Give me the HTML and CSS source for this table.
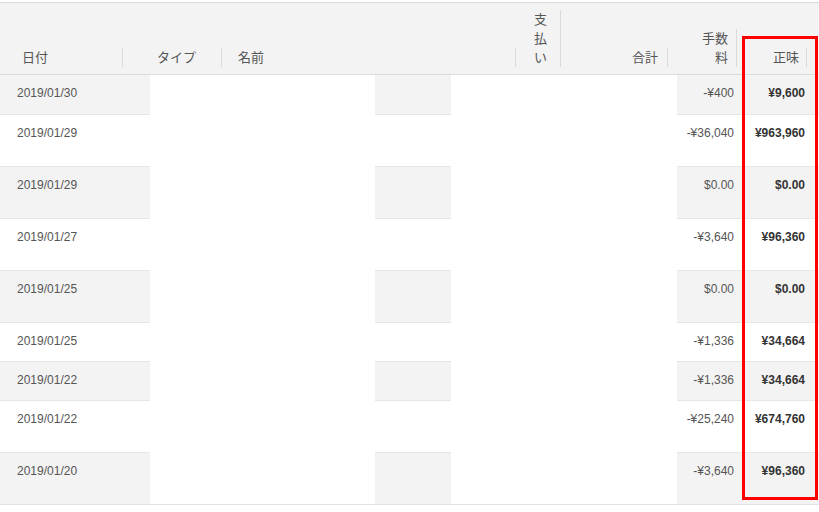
FILE: index.html
```html
<!DOCTYPE html>
<html lang="ja">
<head>
<meta charset="utf-8">
<title>取引一覧</title>
<link rel="stylesheet" href="styles.css">
</head>
<body>
<div class="sheet">
  <div class="head">
    <div class="th th-date">日付</div>
    <div class="th th-type">タイプ</div>
    <div class="th th-name">名前</div>
    <div class="th th-pay">支払い</div>
    <div class="th th-total">合計</div>
    <div class="th th-fee">手数料</div>
    <div class="th th-net">正味</div>
  </div>
  <div class="body">
    <div class="row odd"><div class="td date">2019/01/30</div><div class="td mask m1"></div><div class="td gap"></div><div class="td mask m2"></div><div class="td fee">-¥400</div><div class="td net">¥9,600</div></div>
    <div class="row tall"><div class="td date">2019/01/29</div><div class="td mask m1"></div><div class="td gap"></div><div class="td mask m2"></div><div class="td fee">-¥36,040</div><div class="td net">¥963,960</div></div>
    <div class="row odd tall"><div class="td date">2019/01/29</div><div class="td mask m1"></div><div class="td gap"></div><div class="td mask m2"></div><div class="td fee">$0.00</div><div class="td net">$0.00</div></div>
    <div class="row tall"><div class="td date">2019/01/27</div><div class="td mask m1"></div><div class="td gap"></div><div class="td mask m2"></div><div class="td fee">-¥3,640</div><div class="td net">¥96,360</div></div>
    <div class="row odd tall"><div class="td date">2019/01/25</div><div class="td mask m1"></div><div class="td gap"></div><div class="td mask m2"></div><div class="td fee">$0.00</div><div class="td net">$0.00</div></div>
    <div class="row"><div class="td date">2019/01/25</div><div class="td mask m1"></div><div class="td gap"></div><div class="td mask m2"></div><div class="td fee">-¥1,336</div><div class="td net">¥34,664</div></div>
    <div class="row odd"><div class="td date">2019/01/22</div><div class="td mask m1"></div><div class="td gap"></div><div class="td mask m2"></div><div class="td fee">-¥1,336</div><div class="td net">¥34,664</div></div>
    <div class="row tall"><div class="td date">2019/01/22</div><div class="td mask m1"></div><div class="td gap"></div><div class="td mask m2"></div><div class="td fee">-¥25,240</div><div class="td net">¥674,760</div></div>
    <div class="row odd tall last"><div class="td date">2019/01/20</div><div class="td mask m1"></div><div class="td gap"></div><div class="td mask m2"></div><div class="td fee">-¥3,640</div><div class="td net">¥96,360</div></div>
  </div>
  <div class="highlight"></div>
</div>
</body>
</html>
```

FILE: styles.css
```css
* { box-sizing: border-box; }

html, body {
  margin: 0;
  padding: 0;
  background: #ffffff;
}

body {
  font-family: "Liberation Sans", Arial, "Noto Sans CJK JP", sans-serif;
  font-size: 12px;
  color: #555555;
  width: 819px;
  height: 512px;
  overflow: hidden;
}

.sheet {
  position: relative;
  margin-top: 2px;
  border-top: 1px solid #d6d9dc;
}

/* ---------- header ---------- */
.head {
  display: flex;
  align-items: flex-end;
  height: 72px;
  padding-bottom: 7px;
  background: #f3f3f3;
  border-bottom: 1px solid #d9dcdf;
  font-family: "Liberation Sans", "Noto Sans CJK JP", sans-serif;
  font-size: 13px;
  color: #555555;
}

.th {
  flex: none;
  line-height: 19px;
  border-right: 1px solid #dadada;
  text-align: right;
}

.th-date  { width: 123px; padding-left: 22px; text-align: left; }
.th-type  { width: 99px;  padding-left: 34px; text-align: left; }
.th-name  { width: 294px; padding-left: 16px; text-align: left; }
.th-pay   { width: 45px;  padding-left: 18px; padding-right: 13px; }
.th-total { width: 107px; padding-right: 9px; }
.th-fee   { width: 69px;  padding-left: 30px; padding-right: 8px; }
.th-net   { width: 70px;  padding-right: 7px; }

/* ---------- body ---------- */
.body {
  border-bottom: 1px solid #e3e3e3;
}

.row {
  display: flex;
  height: 39px;
  background: #ffffff;
}

.row.tall { height: 52px; }

.td {
  flex: none;
  padding-top: 11px;
  line-height: 14px;
  border-top: 1px solid #e6e6e6;
  white-space: nowrap;
}

.row:first-child .td { border-top: none; }

.row.odd .td { background: #f3f3f3; }

.date { width: 150px; padding-left: 17px; }
.m1   { width: 225px; }
.gap  { width: 76px; }
.m2   { width: 226px; }
.fee  { width: 65px; text-align: right; padding-right: 8px; }
.net  { flex: 1; text-align: right; padding-right: 14px; font-weight: bold; color: #333333; }

.row .td.mask,
.row.odd .td.mask {
  background: #ffffff;
  border-top: none;
}

.row.last .td.mask {
  height: 47px;
}

/* ---------- annotation ---------- */
.highlight {
  position: absolute;
  left: 742px;
  top: 33px;
  width: 76px;
  height: 464px;
  border: 3px solid #ff0000;
}
```
